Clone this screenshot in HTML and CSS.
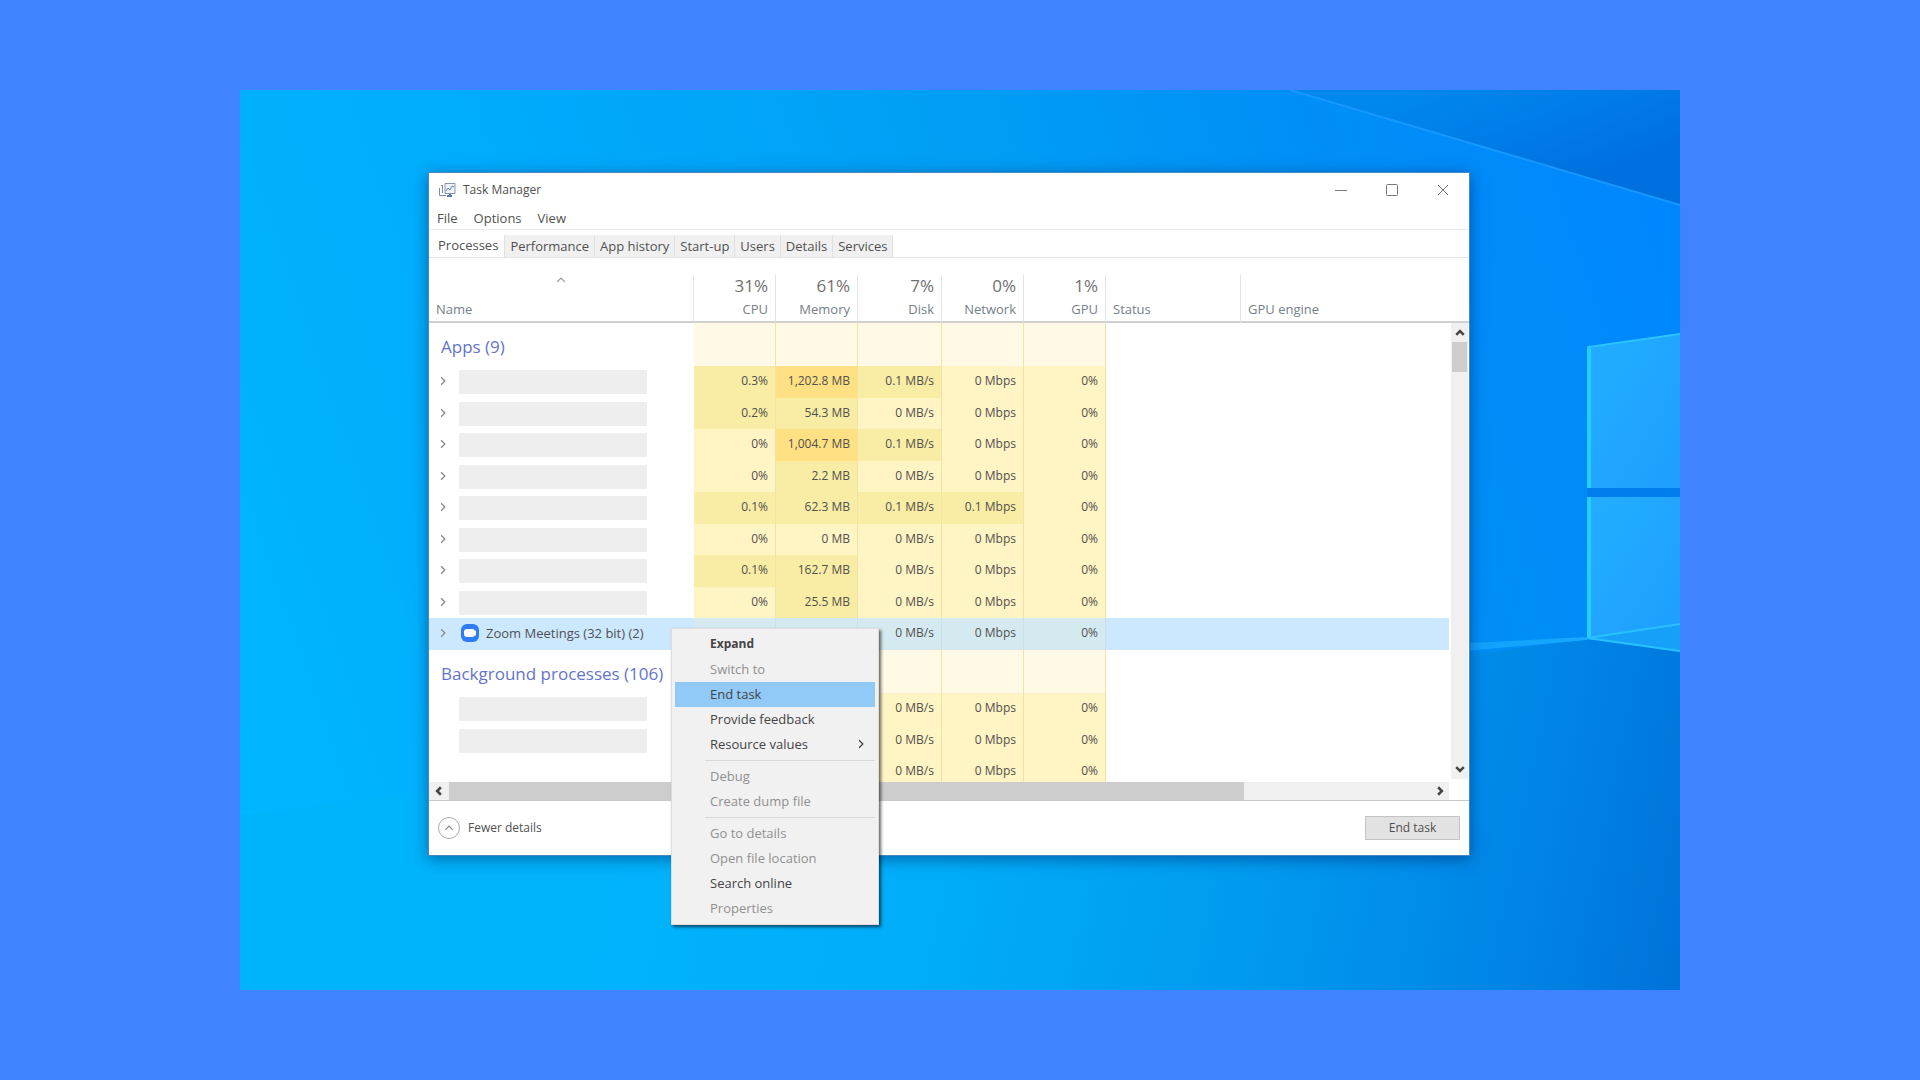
FILE: index.html
```html
<!DOCTYPE html>
<html lang="en">
<head>
    <meta charset="UTF-8">
    <meta name="viewport" content="width=device-width, initial-scale=1.0">
    <title>Task Manager</title>
    <link rel="stylesheet" href="styles.css">
</head>
<body>
    <!-- shared icons -->
    <svg class="sprite" aria-hidden="true">
        <symbol id="right" viewBox="0 0 8 8"><path d="M2.5 1 5.5 4 2.5 7" fill="none" stroke="currentColor"/></symbol>
        <symbol id="up" viewBox="0 0 8 8"><path d="M1 5.5 4 2.5 7 5.5" fill="none" stroke="currentColor"/></symbol>
    </svg>

    <main class="desktop">
        <svg class="wallpaper" viewBox="0 0 1440 900" preserveAspectRatio="none" aria-hidden="true">
            <defs>
                <linearGradient id="sky" gradientUnits="userSpaceOnUse" x1="0" y1="700" x2="1440" y2="200">
                    <stop offset="0" stop-color="#00b6ff"/>
                    <stop offset="0.3" stop-color="#00abfc"/>
                    <stop offset="0.6" stop-color="#009ef4"/>
                    <stop offset="0.8" stop-color="#008ff6"/>
                    <stop offset="1" stop-color="#0087fd"/>
                </linearGradient>
                <linearGradient id="ray" x1="0.3" y1="0" x2="1" y2="0.5">
                    <stop offset="0" stop-color="#0088ee"/>
                    <stop offset="0.5" stop-color="#007ce8"/>
                    <stop offset="1" stop-color="#006fe0"/>
                </linearGradient>
                <linearGradient id="floor" gradientUnits="userSpaceOnUse" x1="400" y1="640" x2="1440" y2="860">
                    <stop offset="0" stop-color="#00b4fc"/>
                    <stop offset="0.3" stop-color="#00adf8"/>
                    <stop offset="0.6" stop-color="#009af0"/>
                    <stop offset="0.85" stop-color="#0084e5"/>
                    <stop offset="1" stop-color="#0073d9"/>
                </linearGradient>
                <linearGradient id="pane" x1="0" y1="0" x2="1" y2="1">
                    <stop offset="0" stop-color="#22aeff"/>
                    <stop offset="1" stop-color="#1f9eff"/>
                </linearGradient>
                <linearGradient id="beam" x1="0" x2="1">
                    <stop offset="0" stop-color="#12a8ff" stop-opacity="0"/>
                    <stop offset="1" stop-color="#19a8ff"/>
                </linearGradient>
            </defs>
            <rect width="1440" height="900" fill="url(#sky)"/>
            <path d="M1050 0H1440V115Z" fill="url(#ray)"/>
            <path d="M1050 0 1440 115" stroke="#1698ff" stroke-width="2"/>
            <path d="M0 725 1347 549 1440 562V900H0Z" fill="url(#floor)"/>
            <path d="M900 570 1347 547 1347 550 900 590Z" fill="url(#beam)"/>
            <path d="M1347 398H1440V407H1347Z" fill="#007eee"/>
            <path d="M1347 257 1440 244V398H1347Z" fill="url(#pane)"/>
            <path d="M1347 407H1440V534L1347 548Z" fill="url(#pane)"/>
            <path d="M1347 548 1440 534V561Z" fill="#16a0f8"/>
            <path d="M1348 398V257L1440 244" fill="none" stroke="#2ac4ff" stroke-width="2"/>
            <path d="M1349 258V398M1349 407V547" stroke="#26ceff" stroke-width="4"/>
            <path d="M1440 534 1347 548 1440 561" fill="none" stroke="#28c0ff" stroke-width="2"/>
        </svg>

        <section class="window">
            <header class="title-bar">
                <svg class="app-icon" viewBox="0 0 18 16" aria-hidden="true">
                    <path d="M7 1.500H17V11.500H7Z" fill="#edf3f8" stroke="#8795a8"/>
                    <path d="M8 9 10 6 12 8 14 4 16 5" fill="none" stroke="#6689b8"/>
                    <path d="M3 3.500H5M1.500 6V13.500H8M4.500 4V11" fill="none" stroke="#7d8ca0"/>
                    <path d="M9 14H14M12 12V14" stroke="#5579b4" stroke-width="2"/>
                </svg>
                <h1>Task Manager</h1>
                <div class="controls">
                    <button aria-label="Minimize"><svg viewBox="0 0 12 12"><path d="M0 6.500H12"/></svg></button>
                    <button aria-label="Maximize"><svg viewBox="0 0 12 12"><rect x="0.500" y="0.500" width="11" height="11" rx="1"/></svg></button>
                    <button aria-label="Close"><svg viewBox="0 0 12 12"><path d="M1 1 11 11M11 1 1 11"/></svg></button>
                </div>
            </header>

            <nav class="menu-bar">
                <button>File</button>
                <button>Options</button>
                <button>View</button>
            </nav>

            <nav class="tabs">
                <button class="active">Processes</button>
                <button>Performance</button>
                <button>App history</button>
                <button>Start-up</button>
                <button>Users</button>
                <button>Details</button>
                <button>Services</button>
            </nav>

            <div class="pane">
                <table class="processes">
                    <colgroup>
                        <col class="col-name">
                        <col class="col-value">
                        <col class="col-value">
                        <col class="col-disk">
                        <col class="col-value">
                        <col class="col-value">
                        <col class="col-status">
                        <col>
                    </colgroup>
                    <thead>
                        <tr>
                            <th class="left"><svg class="sort"><use href="#up"/></svg>Name</th>
                            <th><b>31%</b>CPU</th>
                            <th><b>61%</b>Memory</th>
                            <th><b>7%</b>Disk</th>
                            <th><b>0%</b>Network</th>
                            <th><b>1%</b>GPU</th>
                            <th class="left">Status</th>
                            <th class="left last">GPU engine</th>
                        </tr>
                    </thead>
                    <tbody>
                        <tr class="group"><th>Apps (9)</th><td></td><td></td><td></td><td></td><td></td><td></td><td></td></tr>
                        <tr><th><div class="name"><svg><use href="#right"/></svg><span class="bar"></span></div></th><td class="mid">0.3%</td><td class="high">1,202.8 MB</td><td class="mid">0.1 MB/s</td><td>0 Mbps</td><td>0%</td><td></td><td></td></tr>
                        <tr><th><div class="name"><svg><use href="#right"/></svg><span class="bar"></span></div></th><td class="mid">0.2%</td><td class="mid">54.3 MB</td><td>0 MB/s</td><td>0 Mbps</td><td>0%</td><td></td><td></td></tr>
                        <tr><th><div class="name"><svg><use href="#right"/></svg><span class="bar"></span></div></th><td>0%</td><td class="high">1,004.7 MB</td><td class="mid">0.1 MB/s</td><td>0 Mbps</td><td>0%</td><td></td><td></td></tr>
                        <tr><th><div class="name"><svg><use href="#right"/></svg><span class="bar"></span></div></th><td>0%</td><td class="mid">2.2 MB</td><td>0 MB/s</td><td>0 Mbps</td><td>0%</td><td></td><td></td></tr>
                        <tr><th><div class="name"><svg><use href="#right"/></svg><span class="bar"></span></div></th><td class="mid">0.1%</td><td class="mid">62.3 MB</td><td class="mid">0.1 MB/s</td><td class="mid">0.1 Mbps</td><td>0%</td><td></td><td></td></tr>
                        <tr><th><div class="name"><svg><use href="#right"/></svg><span class="bar"></span></div></th><td>0%</td><td>0 MB</td><td>0 MB/s</td><td>0 Mbps</td><td>0%</td><td></td><td></td></tr>
                        <tr><th><div class="name"><svg><use href="#right"/></svg><span class="bar"></span></div></th><td class="mid">0.1%</td><td class="mid">162.7 MB</td><td>0 MB/s</td><td>0 Mbps</td><td>0%</td><td></td><td></td></tr>
                        <tr><th><div class="name"><svg><use href="#right"/></svg><span class="bar"></span></div></th><td>0%</td><td class="mid">25.5 MB</td><td>0 MB/s</td><td>0 Mbps</td><td>0%</td><td></td><td></td></tr>
                        <tr class="selected">
                            <th>
                                <div class="name">
                                    <svg><use href="#right"/></svg>
                                    <svg class="zoom-icon" viewBox="0 0 18 18"><rect width="18" height="18" rx="6" fill="#2f7cf6"/><rect x="3" y="5" width="11" height="8" rx="3" fill="#fff"/><path d="M12 9 15 6V12Z" fill="#fff"/></svg>
                                    Zoom Meetings (32 bit) (2)
                                </div>
                            </th>
                            <td>0%</td><td>79.4 MB</td><td>0 MB/s</td><td>0 Mbps</td><td>0%</td><td></td><td></td>
                        </tr>
                        <tr class="group"><th>Background processes (106)</th><td></td><td></td><td></td><td></td><td></td><td></td><td></td></tr>
                        <tr><th><div class="name child"><span class="bar"></span></div></th><td></td><td></td><td>0 MB/s</td><td>0 Mbps</td><td>0%</td><td></td><td></td></tr>
                        <tr><th><div class="name child"><span class="bar"></span></div></th><td></td><td></td><td>0 MB/s</td><td>0 Mbps</td><td>0%</td><td></td><td></td></tr>
                        <tr class="cut"><th></th><td></td><td></td><td>0 MB/s</td><td>0 Mbps</td><td>0%</td><td></td><td></td></tr>
                    </tbody>
                </table>
                <div class="side">
                    <div class="side-head"></div>
                    <div class="scroll-y">
                        <svg><use href="#up"/></svg>
                        <div class="thumb"></div>
                        <svg class="down"><use href="#up"/></svg>
                    </div>
                </div>
            </div>

            <div class="scroll-x">
                <svg><use class="flip" href="#right"/></svg>
                <div class="track"><div class="thumb"></div></div>
                <svg><use href="#right"/></svg>
            </div>

            <footer class="footer">
                <button class="fewer"><span class="circle"><svg><use href="#up"/></svg></span>Fewer details</button>
                <button class="end-task">End task</button>
            </footer>
        </section>

        <div class="context-menu">
            <button class="default">Expand</button>
            <button disabled>Switch to</button>
            <button class="hover">End task</button>
            <button>Provide feedback</button>
            <button>Resource values<svg><use href="#right"/></svg></button>
            <hr>
            <button disabled>Debug</button>
            <button disabled>Create dump file</button>
            <hr>
            <button disabled>Go to details</button>
            <button disabled>Open file location</button>
            <button>Search online</button>
            <button disabled>Properties</button>
        </div>
    </main>
</body>
</html>
```

FILE: styles.css
```css
* {
    box-sizing: border-box;
}
body {
    margin: 0;
    background-color: #4083ff;
    font-family: "Open Sans", "Noto Sans", sans-serif;
    font-size: 12px;
    line-height: 16px;
    color: #505050;
}
button {
    padding: 0;
    border: none;
    background: none;
    font: inherit;
    color: inherit;
}
svg {
    display: block;
    flex: none;
    width: 10px;
    height: 10px;
}
.sprite {
    position: absolute;
    width: 0;
    height: 0;
}
.desktop {
    position: relative;
    width: 75%;
    aspect-ratio: 16 / 10;
    margin: 90px auto;
    padding: 82px 210px 0 188px;
    overflow: hidden;
}
.wallpaper {
    position: absolute;
    top: 0;
    left: 0;
    width: 100%;
    height: 100%;
}
.window {
    position: relative;
    border: 1px solid #4a86c0;
    background-color: #fff;
    box-shadow: 0 3px 14px rgba(0, 30, 90, 0.5);
}

/* title, menu, tabs */
.title-bar {
    display: flex;
    align-items: center;
    height: 34px;
    padding-left: 9px;
}
.app-icon {
    width: 18px;
    height: 16px;
    margin-right: 7px;
}
h1 {
    margin: 0;
    font-size: 12px;
    font-weight: normal;
}
.controls {
    display: flex;
    margin-left: auto;
    padding-right: 1px;
}
.controls button {
    display: flex;
    align-items: center;
    justify-content: center;
    width: 51px;
    height: 32px;
}
.controls svg {
    width: 12px;
    height: 12px;
    fill: none;
    stroke: #777;
}
.menu-bar {
    display: flex;
    align-items: flex-start;
    gap: 16px;
    height: 23px;
    padding: 3px 8px 0;
    border-bottom: 1px solid #e8ebee;
    font-size: 13px;
}
.tabs {
    display: flex;
    height: 28px;
    padding-top: 5px;
    border-bottom: 1px solid #e3e6e9;
    font-size: 13px;
}
.tabs button {
    padding: 0 5px;
    border-right: 1px solid #e0e0e0;
    background-color: #f0f0f0;
}
.tabs .active {
    padding: 0 6px 3px 9px;
    background-color: #fff;
}

/* process list */
.pane {
    display: flex;
    padding-top: 17px;
}
.processes {
    flex: 1;
    width: 100%;
    table-layout: fixed;
    border-collapse: separate;
    border-spacing: 0;
}
.col-name {
    width: 265px;
}
.col-value {
    width: 82px;
}
.col-disk {
    width: 84px;
}
.col-status {
    width: 135px;
}
th,
td {
    padding: 0;
    font-weight: normal;
    white-space: nowrap;
}
thead th {
    height: 48px;
    padding: 0 7px 4px;
    border-right: 1px solid #e2e5e8;
    border-bottom: 2px solid #d0d0d0;
    vertical-align: bottom;
    text-align: right;
    font-size: 13px;
    color: #75808a;
}
thead .left {
    text-align: left;
}
thead .last {
    border-right: none;
}
thead b {
    display: block;
    margin-bottom: 5px;
    font-size: 17px;
    font-weight: normal;
    line-height: 20px;
    color: #707070;
}
.sort {
    margin: 0 auto 16px;
    color: #999;
}
tbody tr {
    height: 31px;
}
tbody tr:nth-child(even) {
    height: 32px;
}
tbody th {
    padding-bottom: 2px;
    text-align: left;
}
tbody td {
    padding: 0 7px 2px 0;
    border-right: 1px solid #f2e2a6;
    background-color: #fff4c4;
    text-align: right;
}
tbody td.mid {
    background-color: #f9eca4;
}
tbody td.high {
    background-color: #ffe082;
}
tbody td:nth-last-child(-n+2) {
    border-right: none;
    background: none;
}
tbody tr.group {
    height: 43px;
}
.group th {
    padding: 4px 0 0 12px;
    font-size: 17px;
    color: #6474cc;
}
.group td {
    background-color: #fff9e5;
}
tbody tr.selected {
    height: 32px;
    background-color: #cce8ff;
}
.selected td {
    border-right-color: #cbe2e4;
    background-color: #d5eaf0;
}
tbody tr.cut {
    height: 26px;
}
.cut td {
    padding: 4px 7px 0 0;
}
.name {
    display: flex;
    align-items: center;
    padding-left: 9px;
    font-size: 13px;
}
.name > svg {
    color: #888;
}
.child {
    padding-left: 19px;
}
.bar {
    width: 188px;
    height: 24px;
    margin: 2px 0 0 11px;
    background-color: #eee;
}
.name .zoom-icon {
    width: 18px;
    height: 18px;
    margin: 0 7px 0 13px;
}

/* scroll bars */
.side {
    display: flex;
    flex-direction: column;
    width: 20px;
}
.side-head {
    height: 48px;
    border-bottom: 2px solid #d0d0d0;
}
.scroll-y {
    display: flex;
    flex: 1;
    flex-direction: column;
    align-items: center;
    margin: 0 1px 3px 2px;
    padding: 5px 0;
    background-color: #f0f0f0;
}
.scroll-y .thumb {
    width: 15px;
    height: 30px;
    margin: 4px 0 auto;
    background-color: #cdcdcd;
}
.scroll-x {
    display: flex;
    align-items: center;
    height: 18px;
    margin-right: 20px;
    padding: 0 4px 0 5px;
    background-color: #f0f0f0;
}
.scroll-x .track {
    flex: 1;
    margin: 0 5px;
}
.scroll-x .thumb {
    width: 81%;
    height: 18px;
    background-color: #cdcdcd;
}
.scroll-x svg,
.scroll-y svg {
    color: #444;
    stroke-width: 2;
}
.down {
    transform: rotate(180deg);
}
.flip {
    transform: scaleX(-1);
    transform-origin: center;
}

/* footer */
.footer {
    display: flex;
    align-items: center;
    justify-content: space-between;
    height: 55px;
    padding: 0 9px;
    border-top: 1px solid #c8c8c8;
}
.fewer {
    display: flex;
    align-items: center;
    gap: 8px;
}
.circle {
    display: flex;
    align-items: center;
    justify-content: center;
    width: 22px;
    height: 22px;
    border: 1px solid #aaa;
    border-radius: 50%;
    color: #888;
}
.end-task {
    width: 95px;
    height: 24px;
    border: 1px solid #c4c4c4;
    background-color: #e2e2e2;
}

/* right-click menu, lies over the window */
.context-menu {
    position: absolute;
    top: 538px;
    left: 431px;
    width: 208px;
    padding: 3px;
    border: 1px solid #ddd;
    background-color: #f1f1f1;
    box-shadow: 2px 2px 3px rgba(0, 0, 0, 0.6);
    font-size: 13px;
}
.context-menu button {
    display: flex;
    align-items: center;
    justify-content: space-between;
    width: 100%;
    height: 25px;
    padding: 0 9px 1px 35px;
    color: #444;
}
.context-menu button:disabled {
    color: #909090;
}
.context-menu .default {
    font-size: 12px;
    font-weight: bold;
}
.context-menu .hover {
    background-color: #91c9f7;
}
hr {
    height: 1px;
    margin: 3px 0 3px 30px;
    border: none;
    background-color: #d8d8d8;
}
```
